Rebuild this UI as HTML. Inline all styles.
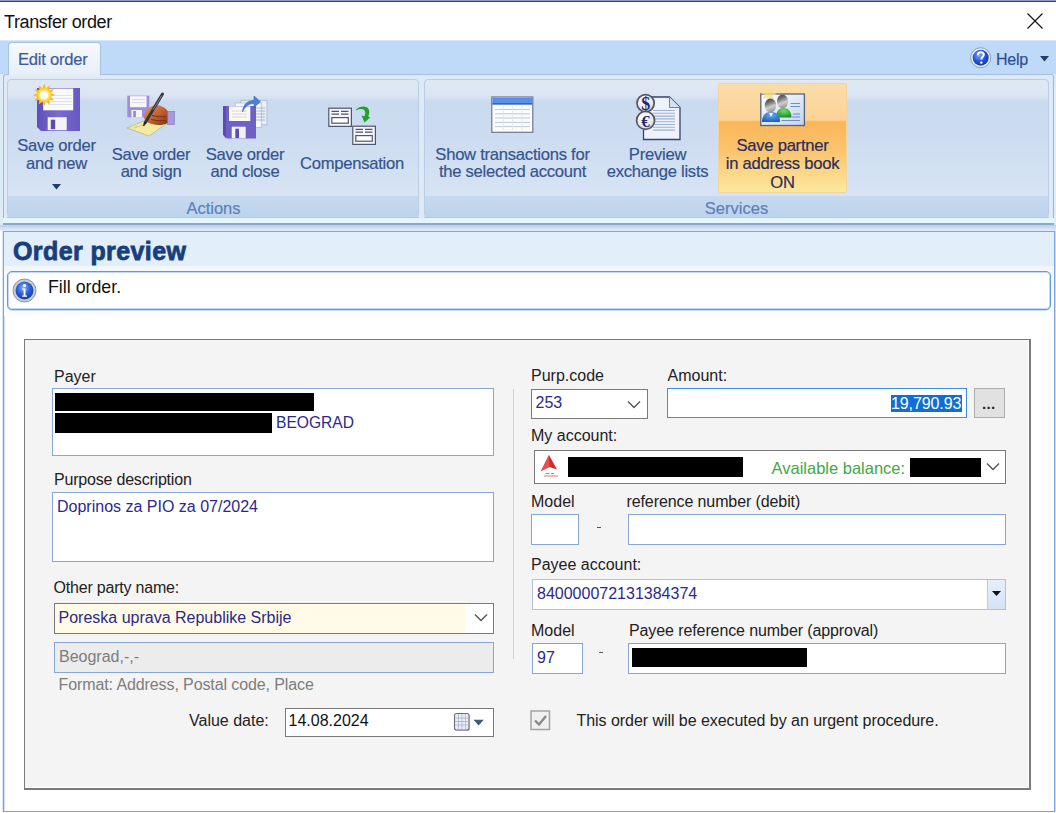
<!DOCTYPE html>
<html><head><meta charset="utf-8">
<style>
*{margin:0;padding:0;box-sizing:border-box}
html,body{width:1056px;height:813px;overflow:hidden;background:#fff;font-family:"Liberation Sans",sans-serif}
.a{position:absolute}
.t{position:absolute;white-space:pre;font-size:16px;line-height:16px}
.rb{color:#35558f;-webkit-text-stroke:0.2px currentColor;font-size:16.6px;line-height:16px;text-align:center;letter-spacing:-0.25px}
.box{position:absolute;border:1px solid #86a6d6;background:#fff}
.lbl{color:#222}
.val{color:#2b2a8c}
</style></head><body>

<!-- top strip -->
<div class="a" style="left:0;top:0;width:1056px;height:1px;background:#8d99c2"></div>
<div class="a" style="left:0;top:1px;width:1056px;height:1px;background:#3b4363"></div>

<div class="t" style="left:4px;top:13.6px;font-size:18px;line-height:17px;color:#111;letter-spacing:-0.4px">Transfer order</div>
<svg class="a" style="left:1026px;top:12px" width="18" height="18"><path d="M1.5 1.5L16.5 16.5M16.5 1.5L1.5 16.5" stroke="#111" stroke-width="1.2"/></svg>

<!-- ribbon band -->
<div class="a" style="left:0;top:40px;width:1056px;height:36px;background:#bfd9f8"></div>
<div class="a" style="left:0;top:40px;width:1056px;height:1px;background:#d6e6fa"></div>
<!-- tab -->
<div class="a" style="left:8px;top:42px;width:93px;height:36px;border:1px solid #a9c1e0;border-bottom:none;border-radius:4px 4px 0 0;background:linear-gradient(#f6f9fd,#e6eef8)"></div>
<div class="t rb" style="left:18px;top:51.5px;color:#3d5c9e;text-align:left">Edit order</div>
<!-- help -->
<svg class="a" style="left:970px;top:47px" width="22" height="22" viewBox="0 0 22 22">
<defs><radialGradient id="hg" cx="40%" cy="35%" r="70%"><stop offset="0" stop-color="#7aa8ff"/><stop offset="0.6" stop-color="#1f4fd0"/><stop offset="1" stop-color="#123a9a"/></radialGradient></defs>
<circle cx="10.7" cy="10.7" r="10" fill="#e8eef8" stroke="#8a9ab5" stroke-width="1"/>
<circle cx="10.7" cy="10.7" r="8" fill="url(#hg)"/>
<path d="M7.8 8.3c0-2 1.3-3.1 3-3.1s3 1 3 2.6c0 1.9-2.2 2.1-2.2 4v.6" fill="none" stroke="#fff" stroke-width="2"/>
<circle cx="11.3" cy="15.6" r="1.2" fill="#fff"/>
</svg>
<div class="t rb" style="left:996px;top:51.5px;color:#2f4f95;font-size:16px;text-align:left">Help</div>
<svg class="a" style="left:1040px;top:56px" width="9" height="6"><path d="M0 0H9L4.5 5.5Z" fill="#1f3d70"/></svg>

<!-- ribbon body -->
<div class="a" style="left:0;top:74px;width:1056px;height:152px;background:#dcedf9"></div>
<div class="a" style="left:3px;top:74px;width:1051px;height:151px;border:1px solid #9db7da;border-top-color:#a8c0e0;border-radius:3px;background:#dfe9f5"></div>
<div class="a" style="left:0;top:225px;width:1056px;height:6px;background:linear-gradient(#b5d0ee,#e6ecfb)"></div>
<div class="a" style="left:3px;top:218px;width:1051px;height:5px;background:#e3f6fd"></div>
<div class="a" style="left:3px;top:223px;width:1051px;height:2px;background:#8aaac6"></div>

<div class="a" style="left:9px;top:74px;width:91px;height:3px;background:#e4ecf6"></div>
<!-- group 1 -->
<div class="a grp" style="left:7px;top:79px;width:412px;height:139px;border:1px solid #b9cde6;border-radius:4px;background:linear-gradient(#dfe8f2 0,#dbe6f2 15px,#c9daef 22px,#cddcf0 60px,#d6e4f4 116px);overflow:hidden">
  <div class="a" style="left:0;top:116px;width:410px;height:22px;background:linear-gradient(#c6d9ef,#bcd3ee)"></div>
</div>
<div class="a" style="left:7px;top:217px;width:412px;height:1px;background:#b5c8dc"></div>
<!-- group 2 -->
<div class="a grp" style="left:424px;top:79px;width:625px;height:139px;border:1px solid #b9cde6;border-radius:4px;background:linear-gradient(#dfe8f2 0,#dbe6f2 15px,#c9daef 22px,#cddcf0 60px,#d6e4f4 116px);overflow:hidden">
  <div class="a" style="left:0;top:116px;width:623px;height:22px;background:linear-gradient(#c6d9ef,#bcd3ee)"></div>
</div>
<div class="a" style="left:424px;top:217px;width:625px;height:1px;background:#b5c8dc"></div>

<div class="t rb" style="left:8px;top:200px;width:411px;color:#5f80b8;font-size:16.5px;letter-spacing:0">Actions</div>
<div class="t rb" style="left:424px;top:200px;width:625px;color:#5f80b8;font-size:16.5px;letter-spacing:0">Services</div>

<!-- highlighted button -->
<div class="a" style="left:718px;top:83px;width:129px;height:110px;border:1px solid #f3d39b;border-radius:2px;background:linear-gradient(#fcdcaa 0,#fbd396 36px,#fab55a 38px,#fbc36c 66px,#fde89e 108px)"></div>


<!-- ICON: save and new -->
<svg class="a" style="left:28px;top:80px" width="56" height="56" viewBox="0 0 56 56">
<defs>
<linearGradient id="fp" x1="0" y1="0" x2="1" y2="0"><stop offset="0" stop-color="#5d4fb8"/><stop offset="0.5" stop-color="#7a6bd0"/><stop offset="1" stop-color="#6758c2"/></linearGradient>
<radialGradient id="sun" cx="50%" cy="50%" r="50%"><stop offset="0" stop-color="#fff"/><stop offset="0.3" stop-color="#fff8c0"/><stop offset="0.6" stop-color="#f9d020"/><stop offset="1" stop-color="#ef9a1a"/></radialGradient>
</defs>
<path d="M9 8H52V51H13L9 47Z" fill="url(#fp)"/>
<rect x="15.2" y="8.6" width="30" height="21.7" fill="#fafafa"/>
<path d="M20 15.5H44M20 18.5H44M20 21.5H44M20 24.5H44" stroke="#dcdce6" stroke-width="0.8"/>
<rect x="19.7" y="37.2" width="19" height="13" fill="#f4f4f8"/>
<rect x="22.8" y="39.7" width="4.4" height="9.5" fill="#5b4cb0"/>
<path d="M16.2 4.0L18.0 8.2L21.7 5.5L21.1 10.1L25.7 9.5L23.0 13.2L27.2 15.0L23.0 16.8L25.7 20.5L21.1 19.9L21.7 24.5L18.0 21.8L16.2 26.0L14.4 21.8L10.7 24.5L11.3 19.9L6.7 20.5L9.4 16.8L5.2 15.0L9.4 13.2L6.7 9.5L11.3 10.1L10.7 5.5L14.4 8.2Z" fill="url(#sun)"/>
<circle cx="16.2" cy="15" r="3.8" fill="#fff" opacity="0.85"/>
</svg>

<!-- ICON: save and sign -->
<svg class="a" style="left:122px;top:88px" width="58" height="54" viewBox="0 0 58 54">
<path d="M5.3 7.7H27.3V29.3H5.3Z" fill="#9c8ed8"/>
<rect x="8" y="8.2" width="16.5" height="11" fill="#f8f8fc"/>
<path d="M10 11.5H23M10 14.5H23" stroke="#d0d0dc" stroke-width="0.8"/>
<rect x="9.5" y="22" width="10.5" height="7.3" fill="#f4f4f8"/>
<rect x="11.3" y="23" width="2.5" height="6" fill="#8d80c8"/>
<path d="M5 40L24 32L44 36L27 48Z" fill="#f2e9a2" stroke="#bdb68e" stroke-width="0.8"/>
<path d="M12 40L22 36.5" stroke="#c9bf7a" stroke-width="0.8"/>
<rect x="45.3" y="23.3" width="7.2" height="13.3" fill="#a898e0" stroke="#8577c4" stroke-width="0.6"/>
<defs><linearGradient id="hand" x1="0" y1="0" x2="1" y2="1"><stop offset="0" stop-color="#e49a62"/><stop offset="0.6" stop-color="#b85a2c"/><stop offset="1" stop-color="#7c3414"/></linearGradient></defs>
<path d="M22 29C23 23 27 19 32 17.5C37 16.5 42 18.5 45.5 22.5V35C41 37.5 35 37.5 30 36C26 35 22.5 33 22 29Z" fill="url(#hand)"/>
<path d="M30 27.5C34 28.5 39 29 44 28.5M29 31.5C33 32.5 39 33 44 32.5" stroke="#7a3010" stroke-width="1" fill="none"/>
<path d="M40.5 6L23 35" stroke="#35353d" stroke-width="3" stroke-linecap="round"/>
<path d="M39.8 7.5L31 22" stroke="#8a8a96" stroke-width="0.9"/>
<path d="M23.5 34L21.5 38" stroke="#222" stroke-width="1.5"/>
</svg>

<!-- ICON: save and close -->
<svg class="a" style="left:218px;top:88px" width="56" height="54" viewBox="0 0 56 54">
<rect x="23" y="12.3" width="26" height="24.5" fill="#e8eef6" stroke="#a9b3c3" stroke-width="0.8"/>
<rect x="17.3" y="15" width="26" height="24.5" fill="#f6f8fb" stroke="#b3bccb" stroke-width="0.8"/>
<path d="M37 20H47M37 23H47M37 26H47M37 29H47M37 32H47" stroke="#9fb0c8" stroke-width="0.9"/>
<path d="M5 18H38V50.6H9L5 46.6Z" fill="#6f60c6"/>
<path d="M5 18H8V50.6L5 46.6Z" fill="#5a4cb4"/>
<rect x="11" y="18.3" width="21.3" height="14.7" fill="#f9f9fb"/>
<path d="M14 23H29M14 26H29M14 29H29" stroke="#d8d2b8" stroke-width="0.8"/>
<rect x="13.7" y="38.7" width="14" height="11.6" fill="#f2f2f6"/>
<rect x="17.3" y="40.7" width="3.7" height="9.3" fill="#5b4cb0"/>
<path d="M24.5 24C25 16 30 12.5 36 12.5V8L42.5 13.8L36 19.3V15.6C31 15.6 27.5 18 24.5 24Z" fill="#4f7fd8" stroke="#3a64b8" stroke-width="0.6"/>
</svg>

<!-- ICON: compensation -->
<svg class="a" style="left:320px;top:100px" width="64" height="50" viewBox="0 0 64 50">
<g id="cd1">
<rect x="8.8" y="8.2" width="22.6" height="18.2" fill="#f4f6fb" stroke="#4e566e" stroke-width="1.2"/>
<path d="M11.5 11.4h7.5M21 11.4h7.5M11.5 14.1h7.5M21 14.1h7.5" stroke="#4e566e" stroke-width="1.2"/>
<rect x="11.8" y="17.6" width="16.5" height="5.6" fill="#fff" stroke="#4e566e" stroke-width="1.2"/>
</g>
<rect x="32.8" y="26.2" width="22.6" height="18.2" fill="#f4f6fb" stroke="#4e566e" stroke-width="1.2"/>
<path d="M35.5 29.4h7.5M45 29.4h7.5M35.5 32.1h7.5M45 32.1h7.5" stroke="#4e566e" stroke-width="1.2"/>
<rect x="35.8" y="35.6" width="16.5" height="5.6" fill="#fff" stroke="#4e566e" stroke-width="1.2"/>
<path d="M36 9.5C40 6 46 5.5 48.5 9C50 11.5 49 14.5 48.2 16.5L50.2 17.5L44.5 22.5L41.5 15.5L44.5 16.3C45.3 14.5 45.8 12 44.5 10.5C42.5 8.5 39 8.8 36 10.5Z" fill="#22a02c"/>
</svg>

<!-- ICON: table -->
<svg class="a" style="left:486px;top:90px" width="52" height="48" viewBox="0 0 52 48">
<rect x="5.8" y="7" width="41" height="35.3" fill="#fbfcff" stroke="#6d7890" stroke-width="1.2"/>
<rect x="6.4" y="7.6" width="39.8" height="6.8" fill="#5d8fe6"/>
<path d="M6.4 13.8H46.2" stroke="#2b55b8" stroke-width="1.2"/>
<path d="M9 19.5H44M9 23.8H44M9 28H44M9 32.4H44M9 36.6H44" stroke="#b9c1d0" stroke-width="0.9"/>
<path d="M17.3 16V40M26.5 16V40M36 16V40" stroke="#e1e5ee" stroke-width="0.9"/>
</svg>

<!-- ICON: currency doc -->
<svg class="a" style="left:628px;top:88px" width="60" height="56" viewBox="0 0 60 56">
<defs><radialGradient id="coin" cx="40%" cy="35%" r="70%"><stop offset="0" stop-color="#ffffff"/><stop offset="0.7" stop-color="#e6e8ec"/><stop offset="1" stop-color="#b9bcc4"/></radialGradient></defs>
<path d="M15.5 9H41.5L52 19.5V51.5H15.5Z" fill="#eef3fb" stroke="#33456e" stroke-width="1.3"/>
<path d="M41.5 9V19.5H52" fill="#d5e0f0" stroke="#6f80a0" stroke-width="1"/>
<path d="M25 22.5H47M25 25.3H47M25 28.1H47M25 30.9H47M25 33.7H47M25 36.5H47M25 39.3H47M25 42.1H47" stroke="#9fb2d0" stroke-width="1.1"/>
<circle cx="17.6" cy="15.2" r="8.6" fill="url(#coin)" stroke="#55575f" stroke-width="1.7"/>
<circle cx="17.6" cy="32.4" r="9" fill="url(#coin)" stroke="#55575f" stroke-width="1.7"/>
<text x="17.8" y="21.8" font-family="Liberation Serif" font-weight="bold" font-size="18" fill="#2a2772" text-anchor="middle">$</text>
<text x="17.6" y="38.8" font-family="Liberation Serif" font-weight="bold" font-size="17" fill="#2a2772" text-anchor="middle">€</text>
</svg>

<!-- ICON: partner -->
<svg class="a" style="left:752px;top:82px" width="60" height="50" viewBox="0 0 60 50">
<defs>
<linearGradient id="card" x1="0" y1="0" x2="1" y2="1"><stop offset="0" stop-color="#ffffff"/><stop offset="1" stop-color="#c4d3ec"/></linearGradient>
<linearGradient id="face" x1="0" y1="0" x2="0.3" y2="1"><stop offset="0" stop-color="#3c3c3c"/><stop offset="0.4" stop-color="#7a7a7a"/><stop offset="0.7" stop-color="#cfcfcf"/><stop offset="1" stop-color="#9a9a9a"/></linearGradient>
<radialGradient id="gb" cx="50%" cy="30%" r="70%"><stop offset="0" stop-color="#6fe06a"/><stop offset="1" stop-color="#1c8f22"/></radialGradient>
<radialGradient id="bb" cx="50%" cy="30%" r="70%"><stop offset="0" stop-color="#6aa8f0"/><stop offset="1" stop-color="#1f5fc0"/></radialGradient>
</defs>
<rect x="8.8" y="12" width="43.6" height="31.5" fill="url(#card)" stroke="#55657f" stroke-width="1.3"/>
<path d="M38.5 21.5H48M38.5 24.5H48M41 32H48M40 35H48M29.5 38.5H48" stroke="#6e8ed0" stroke-width="1.2"/>
<path d="M17 3L18.5 8L23 5.5L20.5 10L25 12L20.5 13.5L22 18L18 15.5L16 20L14.5 15.5L10.5 17L13 13L9 11L13.5 10L11.5 5.5L15.5 8Z" fill="#f3df86" opacity="0.8"/>
<path d="M24 35.5C24 29 27 26 31.5 26C36 26 39.5 29 39.5 35.5Z" fill="url(#gb)"/>
<ellipse cx="30.5" cy="19.5" rx="5.5" ry="7" fill="url(#face)"/>
<path d="M10 40C10 33 13.5 30 19 30C24.5 30 28 33 28 40Z" fill="url(#bb)"/>
<ellipse cx="18.5" cy="23.5" rx="5.7" ry="7" fill="url(#face)"/>
<path d="M17 31L19 35L21 31" fill="#fff"/>
</svg>

<!-- ribbon texts -->
<div class="t rb" style="left:0;top:136.5px;width:113px;line-height:18.5px">Save order
and new</div>
<svg class="a" style="left:52px;top:184px" width="9" height="6"><path d="M0 0H9L4.5 5.5Z" fill="#1f3d70"/></svg>
<div class="t rb" style="left:101px;top:146px;width:100px;line-height:17.3px">Save order
and sign</div>
<div class="t rb" style="left:195px;top:146px;width:100px;line-height:17.3px">Save order
and close</div>
<div class="t rb" style="left:292px;top:156.3px;width:120px">Compensation</div>
<div class="t rb" style="left:430px;top:146px;width:165px;line-height:17.3px">Show transactions for
the selected account</div>
<div class="t rb" style="left:600px;top:146px;width:115px;line-height:17.3px">Preview
exchange lists</div>
<div class="t rb" style="left:718px;top:136.5px;width:129px;line-height:18.5px;color:#2a2d5c">Save partner
in address book
ON</div>

<!-- ORDER PREVIEW PANEL -->
<div class="a" style="left:3px;top:231px;width:1052px;height:581px;border:1px solid #7fa6da;box-shadow:inset 1px 0 0 rgba(127,166,218,0.35),-1px 0 0 rgba(127,166,218,0.3),1px 0 0 rgba(127,166,218,0.4);background:#fff"></div>
<div class="a" style="left:4px;top:232px;width:1050px;height:34px;background:#e3eefb"></div>
<div class="a" style="left:4px;top:266px;width:1050px;height:50px;background:linear-gradient(#f0f6fc,#fbfdff)"></div>
<div class="t" style="left:13px;top:239px;font-size:25px;line-height:25px;font-weight:bold;color:#183f7c;letter-spacing:0.4px;-webkit-text-stroke:0.8px #183f7c">Order preview</div>
<div class="a" style="left:7px;top:271px;width:1044px;height:39px;border:1px solid #5a9ae6;box-shadow:0 1px 0 0 rgba(110,165,235,0.35),inset 0 0 0 1px rgba(120,172,236,0.45);border-radius:5px;background:#fff"></div>
<svg class="a" style="left:12px;top:278px" width="25" height="25" viewBox="0 0 25 25">
<defs><radialGradient id="ig" cx="45%" cy="35%" r="65%"><stop offset="0" stop-color="#8ab4ff"/><stop offset="0.55" stop-color="#2a5fd6"/><stop offset="1" stop-color="#173e9e"/></radialGradient></defs>
<circle cx="12.5" cy="12.5" r="11.5" fill="#c8ccd4" stroke="#8d929c" stroke-width="1"/>
<circle cx="12.5" cy="12.5" r="9" fill="url(#ig)"/>
<circle cx="12.5" cy="7.5" r="1.6" fill="#fff"/>
<path d="M10.2 10.5h3.3v7h1.5v1.3h-4.8v-1.3h1.4v-5.7h-1.4z" fill="#fff"/>
</svg>
<div class="t" style="left:48px;top:279px;font-size:17.8px;line-height:17px;color:#111">Fill order.</div>

<!-- FORM BOX -->
<div class="a" style="left:24px;top:339px;width:1007px;height:451px;border:1px solid #7a7a7a;border-right-width:2px;border-bottom-width:2px;background:#f4f4f4;box-shadow:inset -1px -1px 0 #fff"></div>

<!-- left column -->
<div class="t lbl" style="left:54px;top:368.5px">Payer</div>
<div class="box" style="left:52px;top:388px;width:442px;height:68px"></div>
<div class="a" style="left:55px;top:393px;width:259px;height:18px;background:#000"></div>
<div class="a" style="left:55px;top:413px;width:217px;height:20px;background:#000"></div>
<div class="t val" style="left:276px;top:414.5px;font-size:15.6px">BEOGRAD</div>

<div class="t lbl" style="left:54px;top:472px;letter-spacing:-0.2px">Purpose description</div>
<div class="box" style="left:52px;top:492px;width:442px;height:70px"></div>
<div class="t val" style="left:57px;top:498.5px">Doprinos za PIO za 07/2024</div>

<div class="t lbl" style="left:53.5px;top:580px;letter-spacing:-0.2px">Other party name:</div>
<div class="a" style="left:54px;top:603px;width:440px;height:31px;border:1px solid #7a7a7a;background:#fff"></div>
<div class="a" style="left:55px;top:604px;width:410px;height:29px;background:#fffbe6"></div>
<div class="t val" style="left:58.5px;top:610px">Poreska uprava Republike Srbije</div>
<svg class="a" style="left:474px;top:613px" width="14" height="9"><path d="M1 1.5L7 7.5L13 1.5" fill="none" stroke="#555" stroke-width="1.4"/></svg>

<div class="box" style="left:54px;top:642px;width:440px;height:31px;background:#ececec"></div>
<div class="t" style="left:59px;top:649px;color:#7d7d7d">Beograd,-,-</div>
<div class="t" style="left:58.5px;top:677px;color:#7d7d7d;letter-spacing:-0.1px">Format: Address, Postal code, Place</div>

<div class="t lbl" style="left:189px;top:713px">Value date:</div>
<div class="a" style="left:285px;top:708px;width:209px;height:29px;border:1px solid #7a7a7a;background:#fff"></div>
<div class="t" style="left:288.5px;top:713px;color:#111">14.08.2024</div>
<svg class="a" style="left:453px;top:712px" width="34" height="21" viewBox="0 0 34 21">
<rect x="2" y="2" width="15" height="17" rx="2" fill="#3c3c3c" opacity="0.25"/>
<rect x="1.5" y="1.5" width="14.5" height="16.5" rx="2" fill="#eceef6" stroke="#6d6f76" stroke-width="1.1"/>
<path d="M2 6h13.5M2 9.5h13.5M2 13h13.5M5.5 2v15.5M9 2v15.5M12.5 2v15.5" stroke="#aab3cc" stroke-width="0.8"/>
<path d="M20.5 7.8h10.3l-5.15 5.7z" fill="#3b5a8a"/>
</svg>

<!-- vertical separator -->
<div class="a" style="left:513px;top:389px;width:1px;height:270px;background:#d2d2d2"></div>

<!-- right column -->
<div class="t lbl" style="left:531px;top:368px">Purp.code</div>
<div class="a" style="left:531px;top:389px;width:117px;height:30px;border:1px solid #7a7a7a;background:#fff"></div>
<div class="t val" style="left:535.5px;top:395px">253</div>
<svg class="a" style="left:627px;top:400px" width="14" height="9"><path d="M1 1.5L7 7.5L13 1.5" fill="none" stroke="#555" stroke-width="1.4"/></svg>

<div class="t lbl" style="left:667.5px;top:368px">Amount:</div>
<div class="a" style="left:667px;top:388px;width:300px;height:30px;border:1px solid #3c8de6;background:#fff"></div>
<div class="a" style="left:891px;top:395px;width:71px;height:17px;background:#0f6fd6"></div>
<div class="t" style="left:891px;top:395.5px;color:#fff;letter-spacing:-0.1px">19,790.93</div>
<div class="a" style="left:974px;top:388px;width:31px;height:30px;border:1px solid #adadad;background:#e1e1e1"></div>
<div class="t" style="left:982px;top:396px;font-size:15px;font-weight:bold;color:#222;letter-spacing:0.3px">...</div>

<div class="t lbl" style="left:531px;top:428px">My account:</div>
<div class="a" style="left:534px;top:450px;width:472px;height:34px;border:1px solid #7a7a7a;background:#fff"></div>
<svg class="a" style="left:536px;top:452px" width="28" height="28" viewBox="0 0 28 28">
<path d="M13 3L21 17.5L13.5 15L5 19Z" fill="#d42a2a"/>
<path d="M13 3L13.5 15L5 19Z" fill="#e85050"/>
<path d="M9.5 21.5h4M15 21.5h3M8 24h14" stroke="#c98080" stroke-width="1"/>
</svg>
<div class="a" style="left:568px;top:457px;width:175px;height:20px;background:#000"></div>
<div class="t" style="left:771.5px;top:459.5px;color:#44a844;font-size:16.5px">Available balance:</div>
<div class="a" style="left:910px;top:458px;width:71px;height:19px;background:#000"></div>
<svg class="a" style="left:986px;top:462px" width="14" height="9"><path d="M1 1.5L7 7.5L13 1.5" fill="none" stroke="#555" stroke-width="1.4"/></svg>

<div class="t lbl" style="left:531px;top:494px">Model</div>
<div class="box" style="left:531px;top:514px;width:48px;height:31px"></div>
<div class="a" style="left:597px;top:527px;width:4px;height:1.2px;background:#555"></div>
<div class="t lbl" style="left:626.5px;top:494px;letter-spacing:-0.1px">reference number (debit)</div>
<div class="box" style="left:628px;top:514px;width:378px;height:31px"></div>

<div class="t lbl" style="left:531px;top:557px">Payee account:</div>
<div class="box" style="left:532px;top:579px;width:474px;height:31px;border-color:#b3c1d6"></div>
<div class="a" style="left:987px;top:580px;width:18px;height:29px;border-left:1px solid #c0cad8;background:linear-gradient(#e6eefa,#d6e3f4)"></div>
<svg class="a" style="left:992px;top:591px" width="9" height="6"><path d="M0 0H9L4.5 5Z" fill="#111"/></svg>
<div class="t val" style="left:537px;top:585.5px">840000072131384374</div>

<div class="t lbl" style="left:531px;top:623px">Model</div>
<div class="box" style="left:532px;top:643px;width:51px;height:31px"></div>
<div class="t val" style="left:537px;top:650px">97</div>
<div class="a" style="left:599px;top:652px;width:4px;height:1.2px;background:#555"></div>
<div class="t lbl" style="left:629px;top:623px;letter-spacing:-0.1px">Payee reference number (approval)</div>
<div class="box" style="left:628px;top:643px;width:378px;height:31px"></div>
<div class="a" style="left:632px;top:648px;width:175px;height:19px;background:#000"></div>

<svg class="a" style="left:530px;top:710px" width="21" height="21" viewBox="0 0 21 21">
<rect x="1" y="1" width="18.5" height="18.5" fill="#f0f0f0" stroke="#a3a3a3" stroke-width="1.5"/>
<path d="M5 10.5L9 14.5L16 6" fill="none" stroke="#8a8a8a" stroke-width="2.4"/>
</svg>
<div class="t lbl" style="left:576.5px;top:713px;letter-spacing:-0.05px">This order will be executed by an urgent procedure.</div>

</body></html>
